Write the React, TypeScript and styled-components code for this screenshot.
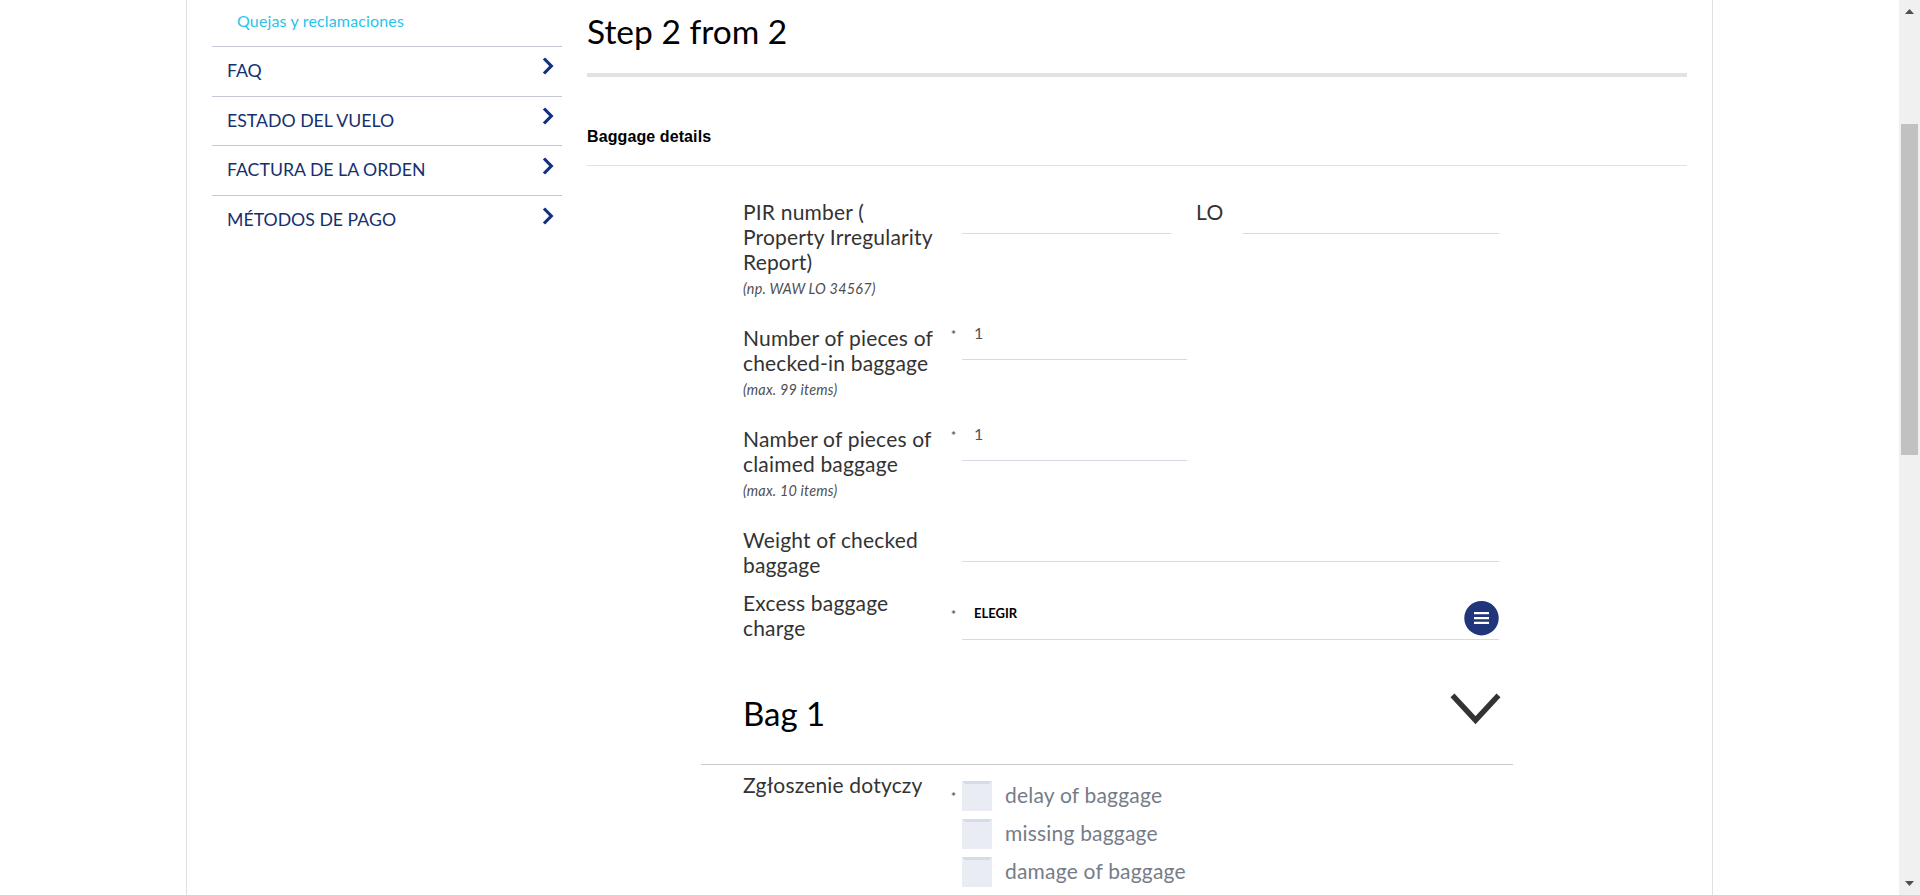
import React from 'react';
import styled, { createGlobalStyle } from 'styled-components';

const GlobalStyle = createGlobalStyle`
  *, *::before, *::after { box-sizing: border-box; }
  body { margin: 0; background: #fff; overflow: hidden; font-family: Lato, "Liberation Sans", sans-serif; }
  h2, h3, p { margin: 0; font-weight: 400; }
`;

const Viewport = styled.div`
  display: flex;
  height: 895px;
  overflow: hidden;
`;

const PageArea = styled.div`
  flex: 1;
  padding-left: 186px;
`;

const Page = styled.div`
  display: flex;
  width: 1527px;
  height: 895px;
  border-left: 1px solid #dfe1e5;
  border-right: 1px solid #dfe1e5;
`;

const Sidebar = styled.nav`
  width: 350px;
  margin-left: 25px;
  flex: none;
`;

const ActiveLink = styled.a`
  display: block;
  height: 46px;
  padding: 11px 0 0 25px;
  font-size: 16px;
  line-height: 19px;
  letter-spacing: 0.15px;
  color: #27c4ec;
`;

const NavRow = styled.a<{ $height: number }>`
  display: flex;
  justify-content: space-between;
  height: ${(p) => p.$height}px;
  border-top: 1px solid #c3c7d3;
  padding: 0 8px 0 15px;
  font-size: 17.7px;
  line-height: 22px;
  color: #16306f;
`;

const NavText = styled.span`
  padding-top: 13px;
`;

const NavChevron = styled.svg<{ $drop: number }>`
  display: block;
  width: 12px;
  height: 18px;
  margin-top: ${(p) => p.$drop - 1}px;
`;

const Main = styled.main`
  width: 1100px;
  margin-left: 25px;
`;

const Title = styled.h2`
  height: 77px;
  padding-top: 11px;
  border-bottom: 4px solid #e2e2e2;
  font-size: 33.5px;
  line-height: 40px;
  color: #000;
`;

const SectionTitle = styled.h3`
  height: 89px;
  padding-top: 51px;
  border-bottom: 1px solid #e2e2e2;
  font: 700 16px/18px "Liberation Sans", Arial, sans-serif;
  letter-spacing: 0.1px;
  color: #000;
`;

const Form = styled.form`
  width: 812px;
  margin-left: 114px;
  padding-top: 33px;
`;

const FormRow = styled.div<{ $height: number }>`
  display: flex;
  align-items: flex-start;
  height: ${(p) => p.$height}px;
  padding-left: 42px;
`;

const Label = styled.div`
  flex: none;
  width: 207px;
  font-size: 21px;
  line-height: 25px;
  letter-spacing: 0.18px;
  color: #333;
  white-space: nowrap;
`;

const Hint = styled.p`
  font-size: 14.4px;
  font-style: italic;
  line-height: 29px;
  letter-spacing: 0.2px;
  color: #505050;
`;

const Star = styled.span<{ $top: number }>`
  flex: none;
  width: 12px;
  padding: ${(p) => p.$top}px 0 0 1px;
  font-size: 12px;
  font-weight: 700;
  line-height: 14px;
  color: #555e70;
`;

const Field = styled.div<{ $width: number }>`
  width: ${(p) => p.$width}px;
  height: 35px;
  border-bottom: 1px solid #d5dae6;
  padding-left: 12px;
  font-size: 16px;
  line-height: 15px;
  color: #555;
`;

const Separator = styled.span`
  width: 72px;
  padding-left: 25px;
  font-size: 21px;
  line-height: 25px;
  letter-spacing: 0.3px;
  color: #333;
`;

const Select = styled.div`
  display: flex;
  justify-content: space-between;
  width: 537px;
  height: 50px;
  padding-left: 12px;
  border-bottom: 1px solid #d5dae6;
`;

const SelectValue = styled.span`
  padding-top: 15px;
  font-size: 13px;
  font-weight: 700;
  line-height: 16px;
  color: #000;
`;

const MenuIcon = styled.svg`
  display: block;
  width: 35px;
  height: 35px;
  margin-top: 11px;
`;

const BagHeader = styled.div`
  display: flex;
  justify-content: space-between;
  height: 83px;
  margin-bottom: 7px;
  padding: 11px 12px 0 42px;
  border-bottom: 1px solid #c9c9c9;
`;

const BagTitle = styled.h2`
  font-size: 33px;
  line-height: 40px;
  color: #000;
`;

const BagChevron = styled.svg`
  display: block;
  width: 51px;
  height: 32px;
`;

const Options = styled.div`
  display: flex;
  flex-direction: column;
  gap: 8px;
  padding-top: 9px;
`;

const Option = styled.label`
  display: flex;
  gap: 13px;
  height: 30px;
  font-size: 21px;
  line-height: 28px;
  letter-spacing: 0.2px;
  color: #757c88;
`;

const Box = styled.span`
  width: 30px;
  height: 30px;
  background: #e9ecf2;
  border: 3px solid #e9ecf2;
  border-top-color: #d6dce6;
`;

const Scrollbar = styled.div`
  display: flex;
  flex-direction: column;
  align-items: center;
  width: 21px;
  padding: 9px 2px 9px;
  background: #f0f0f0;
`;

const Arrow = styled.svg`
  display: block;
  flex: none;
  width: 9px;
  height: 5px;
`;

const Thumb = styled.div`
  width: 17px;
  height: 331px;
  margin: 110px 0 auto;
  background: #c1c1c1;
`;

const navItems = [
  { text: 'FAQ', height: 50, drop: 11 },
  { text: 'ESTADO DEL VUELO', height: 49, drop: 11 },
  { text: 'FACTURA DE LA ORDEN', height: 50, drop: 12 },
  { text: 'MÉTODOS DE PAGO', height: 50, drop: 12 },
];

export default function App() {
  return (
    <>
      <GlobalStyle />
      <Viewport>
        <PageArea>
          <Page>
            <Sidebar>
              <ActiveLink>Quejas y reclamaciones</ActiveLink>
              {navItems.map((item) => (
                <NavRow key={item.text} $height={item.height}>
                  <NavText>{item.text}</NavText>
                  <NavChevron $drop={item.drop} viewBox="0 0 12 18">
                    <path d="M2 1.5L9.3 9L2 16.5" fill="none" stroke="#132f80" strokeWidth="3.2" />
                  </NavChevron>
                </NavRow>
              ))}
            </Sidebar>
            <Main>
              <Title>Step 2 from 2</Title>
              <SectionTitle>Baggage details</SectionTitle>
              <Form>
                <FormRow $height={126}>
                  <Label>
                    PIR number (<br />Property Irregularity<br />Report)
                    <Hint>(np. WAW LO 34567)</Hint>
                  </Label>
                  <Star $top={3} />
                  <Field $width={209} />
                  <Separator>LO</Separator>
                  <Field $width={256} />
                </FormRow>
                <FormRow $height={101}>
                  <Label>
                    Number of pieces of<br />checked-in baggage
                    <Hint>(max. 99 items)</Hint>
                  </Label>
                  <Star $top={3}>*</Star>
                  <Field $width={225}>1</Field>
                </FormRow>
                <FormRow $height={101}>
                  <Label>
                    Namber of pieces of<br />claimed baggage
                    <Hint>(max. 10 items)</Hint>
                  </Label>
                  <Star $top={3}>*</Star>
                  <Field $width={225}>1</Field>
                </FormRow>
                <FormRow $height={63}>
                  <Label>Weight of checked<br />baggage</Label>
                  <Star $top={3} />
                  <Field $width={537} />
                </FormRow>
                <FormRow $height={92}>
                  <Label>Excess baggage<br />charge</Label>
                  <Star $top={18}>*</Star>
                  <Select>
                    <SelectValue>ELEGIR</SelectValue>
                    <MenuIcon viewBox="0 0 35 35">
                      <circle cx="17.5" cy="17.2" r="17.2" fill="#20357a" />
                      <path d="M10 12.2H25M10 17.1H25M10 21.8H25" stroke="#fff" strokeWidth="2.3" />
                    </MenuIcon>
                  </Select>
                </FormRow>
                <BagHeader>
                  <BagTitle>Bag 1</BagTitle>
                  <BagChevron viewBox="0 0 51 32">
                    <path d="M2.5 2.3L25.5 27.2L48.5 2.3" fill="none" stroke="#333" strokeWidth="5.4" />
                  </BagChevron>
                </BagHeader>
                <FormRow $height={130}>
                  <Label>Zgłoszenie dotyczy</Label>
                  <Star $top={18}>*</Star>
                  <Options>
                    {['delay of baggage', 'missing baggage', 'damage of baggage'].map((text) => (
                      <Option key={text}><Box />{text}</Option>
                    ))}
                  </Options>
                </FormRow>
              </Form>
            </Main>
          </Page>
        </PageArea>
        <Scrollbar>
          <Arrow viewBox="0 0 9 5"><path d="M0 5L4.5 0L9 5Z" fill="#505050" /></Arrow>
          <Thumb />
          <Arrow viewBox="0 0 9 5"><path d="M0 0L4.5 5L9 0Z" fill="#505050" /></Arrow>
        </Scrollbar>
      </Viewport>
    </>
  );
}
